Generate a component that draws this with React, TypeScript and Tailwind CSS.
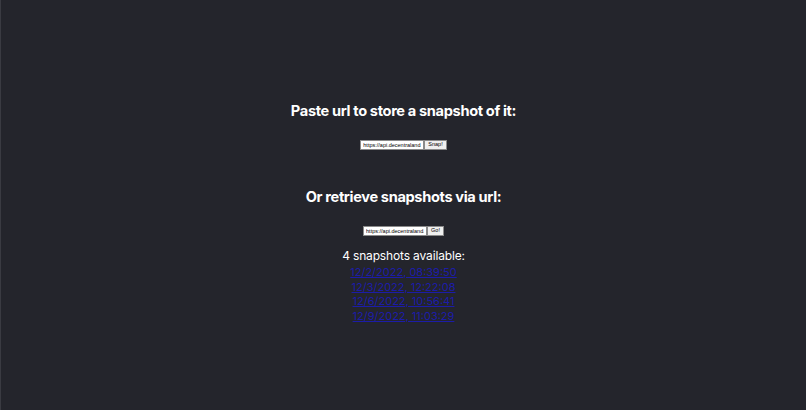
import { useState } from "react"

const snapshots = [
  "12/2/2022, 08:39:50",
  "12/3/2022, 12:22:08",
  "12/6/2022, 10:56:41",
  "12/9/2022, 11:03:29",
]

export default function App() {
  const [storeUrl, setStoreUrl] = useState("https://api.decentraland.org/v1/parcels")
  const [fetchUrl, setFetchUrl] = useState("https://api.decentraland.org/v1/parcels")

  return (
    <div className="h-[410px] bg-[#24252c] text-white flex flex-col items-center pt-[104px] font-['Inter',_sans-serif] border-l border-[#3a3b42]">
      {/* Store */}
      <h2 className="text-[14.6px] font-bold leading-[15px] tracking-[-0.35px]">Paste url to store a snapshot of it:</h2>
      <div className="mt-[21px] flex items-center">
        <input
          value={storeUrl}
          onChange={(e) => setStoreUrl(e.target.value)}
          className="w-[64px] h-[10px] bg-white text-black text-[5.5px] px-[2px] border border-[#8a8a8a] outline-none font-['Liberation_Sans',_sans-serif]"
        />
        <button className="h-[10px] px-[3px] bg-[#efefef] text-black text-[5.5px] leading-none border border-[#8a8a8a] font-['Liberation_Sans',_sans-serif]">
          Snap!
        </button>
      </div>

      {/* Retrieve */}
      <h2 className="mt-[40px] text-[14.6px] font-bold leading-[15px] tracking-[-0.35px]">Or retrieve snapshots via url:</h2>
      <div className="mt-[21px] flex items-center">
        <input
          value={fetchUrl}
          onChange={(e) => setFetchUrl(e.target.value)}
          className="w-[64px] h-[10px] bg-white text-black text-[5.5px] px-[2px] border border-[#8a8a8a] outline-none font-['Liberation_Sans',_sans-serif]"
        />
        <button className="h-[10px] px-[3px] bg-[#efefef] text-black text-[5.5px] leading-none border border-[#8a8a8a] font-['Liberation_Sans',_sans-serif]">
          Go!
        </button>
      </div>

      <p className="mt-[12px] text-[12px] leading-[15px] tracking-[-0.15px]">{snapshots.length} snapshots available:</p>
      <ul className="mt-[2px] flex flex-col items-center text-[11px] leading-[14.7px]">
        {snapshots.map((s) => (
          <li key={s}>
            <a href="#" className="text-[#1c1ca8] underline">
              {s}
            </a>
          </li>
        ))}
      </ul>
    </div>
  )
}
